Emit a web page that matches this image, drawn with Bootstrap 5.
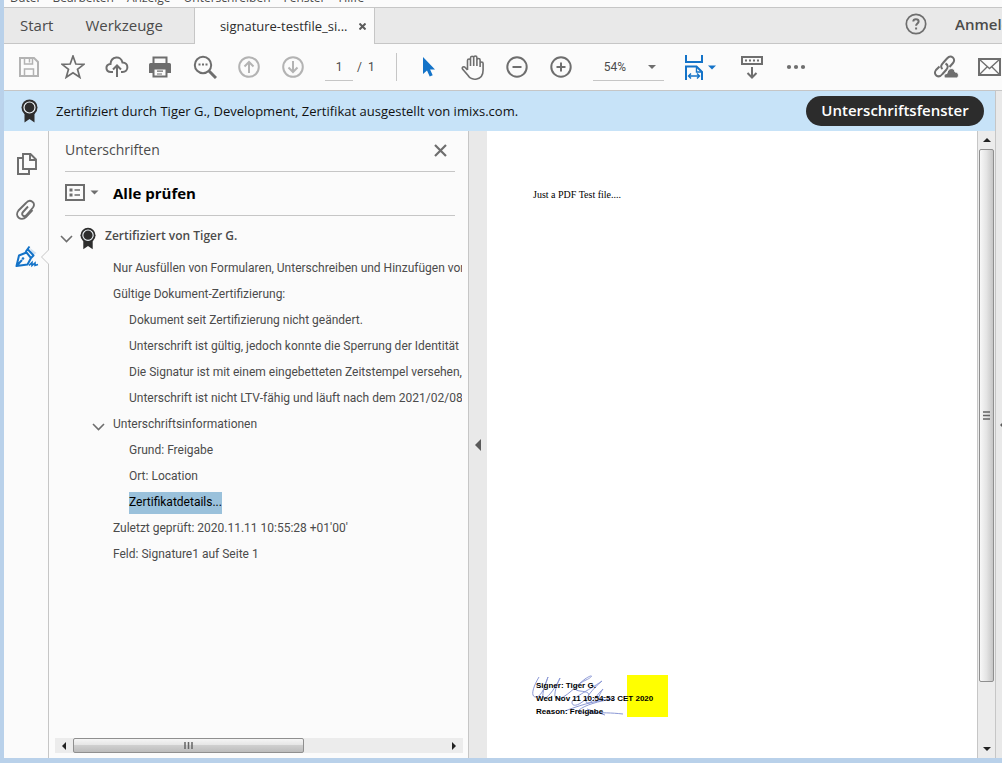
<!DOCTYPE html>
<html lang="de">
<head>
<meta charset="utf-8">
<meta name="viewport" content="width=device-width, initial-scale=1">
<title>signature-testfile_signed.pdf</title>
<link href="https://cdn.jsdelivr.net/npm/bootstrap@5.3.0/dist/css/bootstrap.min.css" rel="stylesheet">
<style>
  :root { --line: #c6c6c6; --paper: #fbfbfb; --chrome: #e9e9e9; --ink: #4b4b4b; --icon: #6e6e6e; --blue: #1473c8; --frame: #b9d1ea; }
  body { font-family: "Open Sans", "Noto Sans", sans-serif; font-size: 13px; line-height: 20px; color: var(--ink); background: var(--frame); }
  button { font: inherit; color: inherit; background: none; border: 0; padding: 0; }
  svg { display: block; fill: none; stroke: currentColor; stroke-width: 2; }
  .app { border: solid var(--frame); border-width: 0 0 5px 4px; background: var(--paper); }
  .menus { height: 8px; border-bottom: 1px solid var(--line); font-size: 12px; line-height: 16px; gap: 13px; padding-left: 6px; align-items: flex-end; }
  .menus a { color: var(--ink); text-decoration: none; margin-bottom: 1px; }
  .tabs { height: 36px; background: var(--chrome); border-bottom: 1px solid var(--line); font-size: 15px; }
  .tab-plain { padding: 0 16px 2px; }
  .tab-doc { width: 181px; margin: 0 0 -1px 15px; background: var(--paper); border: solid var(--line); border-width: 0 1px; font-size: 13px; color: #2d2d2d; padding-left: 25px; }
  .account { width: 47px; font-weight: 600; }
  .tools { height: 47px; border-bottom: 1px solid var(--line); color: var(--icon); font: 12px "Roboto", sans-serif; padding-left: 3px; }
  .tool { width: 44px; flex: none; display: flex; justify-content: center; }
  .off { color: #b3b3b3; }
  .pageno, .zoomer { border: 0; border-bottom: 1px solid var(--line); background: none; color: var(--ink); height: 27px; border-radius: 0; padding: 0; }
  .pageno { width: 28px; text-align: center; }
  .page-field { margin-left: 10px; color: var(--ink); }
  .zoom-field { margin: 0 14px 0 10px; }
  .zoomer { width: 71px; padding: 0 0 0 11px; appearance: none; }
  .rule-v { width: 1px; height: 28px; background: var(--line); margin: 0 10px 0 21px; }
  .blue { color: var(--blue); }
  .certbar { height: 40px; background: #c7e3f8; color: #111; padding-left: 17px; gap: 18px; }
  .pill { height: 30px; width: 178px; border-radius: 15px; background: #2c2c2c; color: #fff; font-size: 15px; font-weight: 600; margin-right: 11px; padding-bottom: 2px; }
  .rail { width: 45px; border-right: 1px solid var(--line); color: var(--icon); padding: 21px 0 0 1px; gap: 22px; }
  .notch { position: absolute; right: -1px; top: 119px; }
  .notch .gap-line { stroke: var(--paper); }
  .panel { width: 420px; border-right: 1px solid var(--line); padding: 0 5px 5px 6px; }
  .head { margin: 0 8px 0 10px; border-bottom: 1px solid var(--line); padding-bottom: 2px; }
  .head-title { height: 41px; font-size: 14px; }
  .head-check { height: 44px; color: #000; font-weight: 700; font-size: 15px; }
  .options { color: var(--icon); margin-right: 13px; }
  .tree, .tree ul { list-style: none; margin: 0; padding: 0; }
  .tree { font: 12px/26px "Roboto", sans-serif; white-space: nowrap; padding-top: 7px; margin-right: 1px; }
  .tree summary { list-style: none; display: flex; align-items: center; }
  .tree summary svg { margin-top: 5px; }
  .tree .lvl1 { padding-left: 58px; }
  .tree .lvl2 { padding-left: 16px; }
  .signer { font: 600 12px/26px "Open Sans", sans-serif; height: 32px; padding: 0 0 6px 5px; }
  .seal { margin: 0 9px 0 7px; }
  .info summary { margin-left: -21px; gap: 8px; }
  .picked { background: #9ac1db; color: #000; line-height: 20px; display: inline-block; padding-bottom: 2px; text-decoration: none; }
  .hbar { height: 15px; background: #ececec; }
  .hbar button, .vbar button { color: #222; }
  .arrow { width: 18px; display: flex; justify-content: center; }
  .hthumb { width: 231px; height: 15px; border: 1px solid #8f8f8f; border-radius: 2px; background: linear-gradient(#f5f5f5, #e6e6e6 45%, #cfcfcf 50%, #bcbcbc); }
  .hthumb svg, .vthumb svg { color: #666; }
  .gutter { width: 18px; background: var(--chrome); }
  .doc { background: #fff; padding: 54px 44px 41px 44px; color: #000; }
  .doc p { font: 10px/20px "Liberation Serif", serif; margin: 0; padding-left: 2px; }
  .stamp { width: 137px; height: 42px; font: bold 8px/13px "Liberation Sans", sans-serif; padding: 4px 0 0 5px; background: linear-gradient(to right, transparent 96px, #ff0 96px); white-space: nowrap; }
  .scrawl { position: absolute; left: 0; top: 0; }
  .vbar { width: 18px; background: #ececec; border: solid var(--line); border-width: 0 0 0 1px; padding: 0 1px; }
  .vbar .step { height: 18px; }
  .vthumb { flex: 0 1 85%; border: 1px solid #8f8f8f; border-radius: 2px; background: linear-gradient(to right, #f8f8f8, #e4e4e4 50%, #c6c6c6); }
  .side { width: 7px; background: var(--chrome); border-left: 1px solid var(--line); }
</style>
</head>
<body>
<svg class="d-none">
  <symbol id="ribbon" viewBox="0 0 17 24"><g stroke="none" fill="#2d2d2d"><path d="M3.500 14v9.500l5-3.500 5 3.500V14z"/><circle cx="8.500" cy="8.500" r="8"/></g><circle cx="8.500" cy="8.500" r="5.500" stroke="#eef4f8" stroke-width="1.200"/></symbol>
  <symbol id="down" viewBox="0 0 8 5"><path d="M0 .5h8l-4 4z" fill="currentColor" stroke="none"/></symbol>
  <symbol id="chev" viewBox="0 0 13 8"><path d="M1 1l5.500 5.500L12 1" stroke-width="1.600" stroke="#6e6e6e"/></symbol>
</svg>
<div class="app vh-100 d-flex flex-column overflow-hidden">
  <nav class="menus d-flex flex-shrink-0 overflow-hidden" aria-label="Menü">
    <a href="#">Datei</a><a href="#">Bearbeiten</a><a href="#">Anzeige</a><a href="#">Unterschreiben</a><a href="#">Fenster</a><a href="#">Hilfe</a>
  </nav>
  <div class="tabs d-flex flex-shrink-0">
    <button class="tab-plain">Start</button>
    <button class="tab-plain">Werkzeuge</button>
    <div class="tab-doc d-flex align-items-center"><span>signature-testfile_si...</span>
      <button class="ms-2 ps-1" aria-label="Tab schließen"><svg width="7" height="7" viewBox="0 0 7 7" color="#5c5c5c"><path d="M.5.5l6 6M6.500.5l-6 6"/></svg></button></div>
    <div class="ms-auto d-flex align-items-center pb-1">
      <button class="me-4 pe-1" aria-label="Hilfe"><svg width="22" height="22" viewBox="0 0 22 22" color="#6e6e6e"><circle cx="11" cy="11" r="9.700" stroke-width="1.700"/><path d="M8.300 8.600C8.300 5.400 13.600 5.500 13.600 8.500c0 2-2.500 2-2.500 4.200M11.100 14.500v2"/></svg></button>
      <button class="account overflow-hidden text-nowrap text-start">Anmelden</button>
    </div>
  </div>
  <div class="tools d-flex align-items-center flex-shrink-0">
    <button class="tool off" aria-label="Speichern"><svg width="22" height="22" viewBox="0 0 22 22"><path d="M2 2h14l4 4v14H2z"/><path d="M6.500 2v6h8V2M11.500 3v3.500M6.500 20v-7h9v7" stroke-width="1.500"/></svg></button>
    <button class="tool" aria-label="Favorit"><svg width="24" height="24" viewBox="0 0 24 24"><path stroke-width="1.700" d="M12 1l2.800 8 8.200.300-6.500 5 2.300 8-6.800-4.600-6.800 4.600 2.300-8-6.500-5 8.200-.300z"/></svg></button>
    <button class="tool" aria-label="Hochladen"><svg width="24" height="24" viewBox="0 0 24 24"><path d="M8 17H6c-6 0-6-8-.5-8C6 1 16 0 17.500 7.500c6.500 0 6.500 9.500 0 9.500H16M12 22V11M8 14.500l4-4 4 4"/></svg></button>
    <button class="tool" aria-label="Drucken"><svg width="24" height="24" viewBox="0 0 24 24"><path d="M4.500 8V2.500h13V8"/><path d="M0 9.500Q0 8 1.500 8h19Q22 8 22 9.500V18h-4v-4H4v4H0z" fill="currentColor" stroke="none"/><path d="M4.500 13.500h13v8h-13z" fill="#fbfbfb"/><path d="M8 16.200h6M8 19h5" stroke-width="1.200"/></svg></button>
    <button class="tool" aria-label="Suchen"><svg width="24" height="24" viewBox="0 0 24 24"><circle cx="10" cy="10" r="8.200"/><path d="M16 16l7 7" stroke-width="3"/><path d="M5.500 9.500h2m1.500 0h2m1.500 0h2"/></svg></button>
    <button class="tool off" aria-label="Vorherige Seite"><svg width="22" height="22" viewBox="0 0 22 22"><circle cx="11" cy="11" r="9.800"/><path d="M11 17V6M6.500 10.500L11 6l4.500 4.500"/></svg></button>
    <button class="tool off" aria-label="Nächste Seite"><svg width="22" height="22" viewBox="0 0 22 22"><circle cx="11" cy="11" r="9.800"/><path d="M11 5v11M6.500 11.500L11 16l4.500-4.500"/></svg></button>
    <label class="page-field d-flex align-items-center"><input class="pageno" value="1" aria-label="Seite"><span class="ps-1">/&nbsp; 1</span></label>
    <span class="rule-v"></span>
    <button class="tool blue" aria-label="Auswahl"><svg width="14" height="22" viewBox="0 0 14 22"><path d="M1 1v17l4-3.500 2.700 6 3-1.300-2.600-5.700H13z" fill="currentColor" stroke="none"/></svg></button>
    <button class="tool" aria-label="Hand"><svg width="24" height="26" viewBox="0 0 24 26"><path stroke-width="1.600" d="M6.500 16V6.500c0-2 3-2 3 0V12 4c0-2.300 3.200-2.300 3.200 0v8-8.500c0-2 3.200-2 3.200 0V12 6c0-2 3.200-2 3.200 0v7V9.500c0-2 3-2 3 0V16c0 11-12 11-15 5.500L1.500 15c-1-2 1.500-3 2.700-1.500L6.500 16"/></svg></button>
    <button class="tool" aria-label="Verkleinern"><svg width="22" height="22" viewBox="0 0 22 22"><circle cx="11" cy="11" r="9.700"/><path d="M6.500 11h9"/></svg></button>
    <button class="tool" aria-label="Vergrößern"><svg width="22" height="22" viewBox="0 0 22 22"><circle cx="11" cy="11" r="9.700"/><path d="M6.500 11h9M11 6.500v9"/></svg></button>
    <div class="zoom-field position-relative"><select class="zoomer" aria-label="Zoom"><option>54%</option></select><svg class="position-absolute top-50 end-0 translate-middle-y me-2" width="8" height="5"><use href="#down"/></svg></div>
    <button class="tool blue gap-1 align-items-center" aria-label="Seitenbreite"><svg width="20" height="26" viewBox="0 0 20 26"><path d="M2 1v7h16V1M2 26V12.500h10.500L18 18v8"/><path d="M12.500 12.500V18H18M4.500 22h11M7 19.500L4.500 22 7 24.500M13 19.500l2.500 2.500-2.500 2.500" stroke-width="1.400"/></svg><svg width="8" height="5"><use href="#down"/></svg></button>
    <button class="tool ms-2" aria-label="Bildlauf"><svg width="24" height="24" viewBox="0 0 24 24"><path d="M2 2h20v7H2z"/><path d="M5 5.500h2m2 0h2m2 0h2m2 0h2M12 12v10M7.500 18l4.500 4.500 4.500-4.500"/></svg></button>
    <button class="tool" aria-label="Mehr"><svg width="20" height="6" viewBox="0 0 20 6"><g fill="currentColor" stroke="none"><circle cx="3" cy="3" r="2.100"/><circle cx="10" cy="3" r="2.100"/><circle cx="17" cy="3" r="2.100"/></g></svg></button>
    <button class="tool ms-auto" aria-label="Link freigeben"><svg width="26" height="24" viewBox="0 0 26 24"><path d="M9.500 14c-2.500-2-1-4.500.5-6l4-4.500c4-4.500 9.500.5 6 4.500L16.500 12M12.500 8.500c3 1.500 2.500 4 1 6L9.500 19c-4 5-10 .5-6.500-4L6.500 11.500"/><path d="M12.500 23c-2.500-1-1.500-4.500 1.500-4.500.5-6 7.500-6.500 8-1.500 4 0 4.500 5 1.500 6z" fill="currentColor" stroke="#fbfbfb" stroke-width="1"/></svg></button>
    <button class="ms-2" aria-label="E-Mail"><svg width="26" height="18" viewBox="0 0 26 18"><path d="M3 1h21v16H3z"/><path d="M3 1l10.500 9.500L24 1M3 17l8-8M24 17l-8-8" stroke-width="1.300"/></svg></button>
  </div>
  <div class="d-flex flex-grow-1 overflow-hidden">
    <main class="d-flex flex-column flex-grow-1 overflow-hidden">
      <div class="certbar d-flex align-items-center flex-shrink-0">
        <svg width="17" height="24"><use href="#ribbon"/></svg>
        <span class="me-auto">Zertifiziert durch Tiger G., Development, Zertifikat ausgestellt von imixs.com.</span>
        <button class="pill">Unterschriftsfenster</button>
      </div>
      <div class="d-flex flex-grow-1 overflow-hidden">
        <nav class="rail position-relative d-flex flex-column align-items-center flex-shrink-0">
          <button aria-label="Seiten"><svg width="22" height="24" viewBox="0 0 22 24"><path d="M7 6H2v16h11v-4"/><path d="M7 2h7.500L20 7.500V17H7zM14 2v6h6" stroke-width="1.900"/></svg></button>
          <button aria-label="Anlagen"><svg width="24" height="24" viewBox="0 0 24 24"><path stroke-width="1.900" d="M17.500 12l-6.500 7c-5 5-12-1-7.500-6.500L11 5c4-5 10.500 0 7 4.500L11.500 17c-2.500 2.800-6-.3-3.500-3l5-5.500"/></svg></button>
          <button class="blue" aria-label="Unterschriften"><svg width="24" height="24" viewBox="0 0 24 24"><path d="M15 4l6.500 5-4 2.500z" fill="#cfe0f0" stroke="none"/><path d="M1.500 22L4 11.500l7.500-3 4.500 5.500-3.500 6.500zM1.500 22l5.500-6M10.500 8l4-5.500M12.500 5l6 6.500-2.500 2.500" stroke-linejoin="round"/><circle cx="8" cy="14.500" r="1.300" fill="currentColor" stroke="none"/><path d="M14 21.500l3-3v3l3-2.500v2.500l3-1" stroke-width="1.600"/></svg></button>
          <svg class="notch" width="8" height="14" viewBox="0 0 8 14"><path class="gap-line" d="M7.500 0v14" stroke-width="1"/><path d="M7.500 0l-7 7 7 7" fill="#fbfbfb" stroke="#c6c6c6" stroke-width="1"/></svg>
        </nav>
        <section class="panel d-flex flex-column flex-shrink-0">
          <div class="head head-title d-flex align-items-center justify-content-between"><span>Unterschriften</span><button class="me-2" aria-label="Schließen"><svg width="13" height="13" viewBox="0 0 13 13" color="#6e6e6e"><path d="M1 1l11 11M12 1L1 12" stroke-width="2.200"/></svg></button></div>
          <div class="head head-check d-flex align-items-center">
            <button class="options d-flex align-items-center" aria-label="Optionen"><svg width="20" height="17" viewBox="0 0 20 17"><path d="M1 1h18v15H1z"/><path d="M9.500 6H15m-5.500 5H15" stroke-width="1.600"/><path d="M4.500 6h3m-3 5h3" stroke-width="2.800"/></svg><svg class="ms-1" width="11" height="5"><use href="#down"/></svg></button>
            <button>Alle prüfen</button>
          </div>
          <div class="tree flex-grow-1 overflow-hidden">
            <details open>
              <summary class="signer"><svg width="13" height="8"><use href="#chev"/></svg><svg class="seal" width="16" height="23"><use href="#ribbon"/></svg><span>Zertifiziert von Tiger G.</span></summary>
              <ul class="lvl1">
                <li>Nur Ausfüllen von Formularen, Unterschreiben und Hinzufügen von Anmerkungen</li>
                <li>Gültige Dokument-Zertifizierung:
                  <ul class="lvl2"><li>Dokument seit Zertifizierung nicht geändert.</li><li>Unterschrift ist gültig, jedoch konnte die Sperrung der Identität</li><li>Die Signatur ist mit einem eingebetteten Zeitstempel versehen,</li><li>Unterschrift ist nicht LTV-fähig und läuft nach dem 2021/02/08</li></ul></li>
                <li><details class="info" open><summary><svg width="13" height="8"><use href="#chev"/></svg>Unterschriftsinformationen</summary>
                  <ul class="lvl2"><li>Grund: Freigabe</li><li>Ort: Location</li><li><a class="picked" href="#">Zertifikatdetails...</a></li></ul></details></li>
                <li>Zuletzt geprüft: 2020.11.11 10:55:28 +01'00'</li>
                <li>Feld: Signature1 auf Seite 1</li>
              </ul>
            </details>
          </div>
          <div class="hbar d-flex align-items-center">
            <button class="arrow" aria-label="Nach links"><svg width="4" height="8" viewBox="0 0 4 8"><path d="M4 0v8L0 4z" fill="currentColor" stroke="none"/></svg></button>
            <div class="hthumb d-flex align-items-center justify-content-center"><svg width="9" height="7" viewBox="0 0 9 7"><path d="M1 0v7M4.500 0v7M8 0v7" stroke-width="1.500"/></svg></div>
            <button class="arrow ms-auto" aria-label="Nach rechts"><svg width="4" height="8" viewBox="0 0 4 8"><path d="M0 0v8l4-4z" fill="currentColor" stroke="none"/></svg></button>
          </div>
        </section>
        <button class="gutter d-flex align-items-center justify-content-center flex-shrink-0" aria-label="Einklappen"><svg width="6" height="12" viewBox="0 0 6 12"><path d="M6 0v12L0 6z" fill="#5a5a5a" stroke="none"/></svg></button>
        <article class="doc flex-grow-1 d-flex flex-column justify-content-between">
          <p>Just a PDF Test file....</p>
          <div class="stamp position-relative">
            <svg class="scrawl" width="96" height="42" viewBox="0 0 96 42"><g stroke-width="1" stroke="#8c99d6"><path d="M8 2C2 12-1 22 5 22S15 8 17 2c-5 12-7 22-3 21S26 10 29 3c-5 10-7 20-3 21 8 0 20-14 28-20 9-6 8-2 1 1-12 6-14 10-6 11s11 2 7 7c-6 6-14 10-15 5s16-12 30-22c-12 10-20 22-14 22 5 0 10-10 15-14-7 10-4 14 1 8M34 36c20-8 36-11 48-12-14 2-28 6-34 11s18 1 44 4"/><path d="M56 34l18 6"/></g></svg>
            <div class="position-relative">Signer: Tiger G.<br>Wed Nov 11 10:54:53 CET 2020<br>Reason: Freigabe</div>
          </div>
        </article>
        <div class="vbar d-flex flex-column flex-shrink-0">
          <button class="step flex-shrink-0 d-flex align-items-center justify-content-center" aria-label="Nach oben"><svg width="8" height="4" viewBox="0 0 8 4"><path d="M0 4h8L4 0z" fill="currentColor" stroke="none"/></svg></button>
          <div class="vthumb d-flex align-items-center justify-content-center"><svg width="7" height="9" viewBox="0 0 7 9"><path d="M0 1h7M0 4.500h7M0 8h7" stroke-width="1.500"/></svg></div>
          <button class="step flex-shrink-0 mt-auto d-flex align-items-center justify-content-center" aria-label="Nach unten"><svg width="8" height="4" viewBox="0 0 8 4"><path d="M0 0h8L4 4z" fill="currentColor" stroke="none"/></svg></button>
        </div>
      </div>
    </main>
    <aside class="side d-flex align-items-center justify-content-end flex-shrink-0"><svg width="2" height="4" viewBox="0 0 2 4"><path d="M2 0v4L0 2z" fill="#5a5a5a" stroke="none"/></svg></aside>
  </div>
</div>
<script src="https://cdn.jsdelivr.net/npm/bootstrap@5.3.0/dist/js/bootstrap.bundle.min.js"></script>
</body>
</html>
